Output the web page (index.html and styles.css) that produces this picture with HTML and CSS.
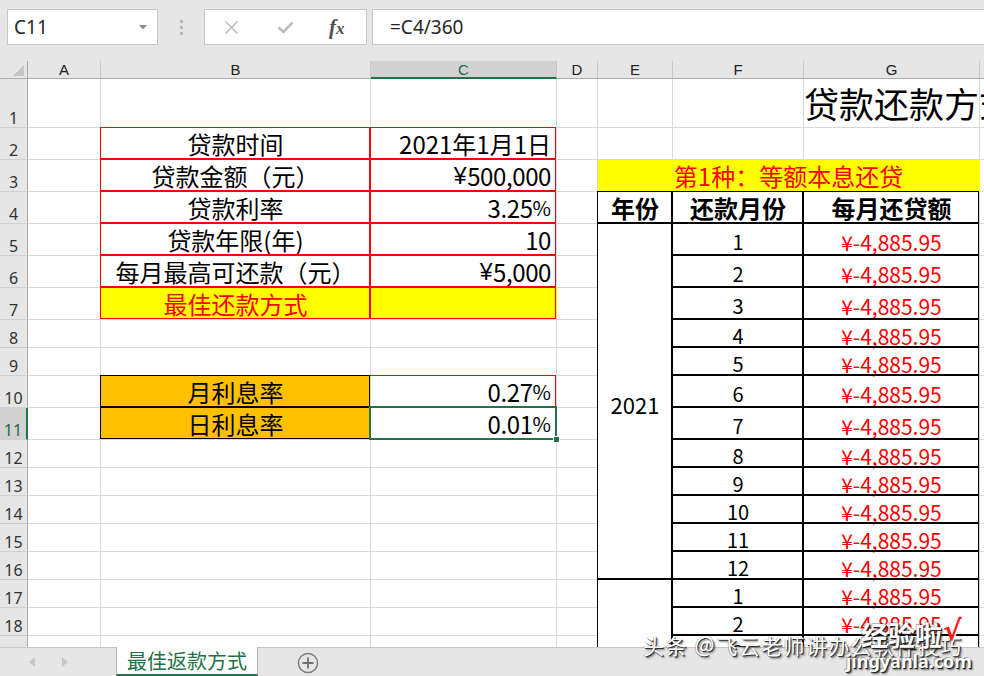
FILE: index.html
```html
<!DOCTYPE html>
<html lang="zh-CN">
<head>
<meta charset="utf-8">
<title>最佳返款方式</title>
<link rel="stylesheet" href="styles.css">
</head>
<body>
<div class="app">
  <div class="fbar">
    <div class="namebox"><span>C11</span><svg class="dd" width="8" height="5" viewBox="0 0 8 5"><polygon points="0,0 8,0 4,4.5" fill="#8a8a8a"/></svg></div>
    <div class="grip"><i></i><i></i><i></i></div>
    <div class="fxbox">
      <svg class="ic-x" width="15" height="15" viewBox="0 0 15 15"><path d="M1.5 1.5 L13.5 13.5 M13.5 1.5 L1.5 13.5" stroke="#bdbdbd" stroke-width="1.6" fill="none"/></svg>
      <svg class="ic-ok" width="17" height="13" viewBox="0 0 17 13"><path d="M1.5 6.5 L6.5 11 L15.5 1.5" stroke="#bdbdbd" stroke-width="2.6" fill="none"/></svg>
      <span class="fx">f<i>x</i></span>
    </div>
    <div class="formula">=C4/360</div>
  </div>

  <div class="sheet">
    <!-- header row -->
    <div class="corner"><svg width="11" height="11" viewBox="0 0 11 11"><polygon points="11,0 11,11 0,11" fill="#c4c4c4"/></svg></div>
    <div class="h">A</div><div class="h">B</div><div class="h hsel">C</div><div class="h">D</div><div class="h">E</div><div class="h">F</div><div class="h">G</div><div class="h"></div>

    <!-- row 1 -->
    <div class="rh">1</div><div class="c"></div><div class="c"></div><div class="c"></div><div class="c"></div><div class="c"></div><div class="c"></div><div class="c title"><span>贷款还款方式</span></div><div class="c"></div>

    <!-- row 2 -->
    <div class="rh">2</div><div class="c"></div><div class="c bd red ctr">贷款时间</div><div class="c bd red rt">2021年1月1日</div><div class="c"></div><div class="c"></div><div class="c"></div><div class="c"></div><div class="c"></div>

    <!-- row 3 -->
    <div class="rh">3</div><div class="c"></div><div class="c bd red ctr">贷款金额（元）</div><div class="c bd red rt num"><span class="yen">¥</span>500,000</div><div class="c"></div><div class="c yel rtx ctr span3">第1种：等额本息还贷</div><div class="c"></div>

    <!-- row 4 -->
    <div class="rh">4</div><div class="c"></div><div class="c bd red ctr">贷款利率</div><div class="c bd red rt num">3.25<span class="pct">%</span></div><div class="c"></div><div class="c bd b ctr">年份</div><div class="c bd b ctr">还款月份</div><div class="c bd b ctr">每月还贷额</div><div class="c"></div>

    <!-- row 5 -->
    <div class="rh">5</div><div class="c"></div><div class="c bd red ctr">贷款年限(年)</div><div class="c bd red rt num">10</div><div class="c"></div><div class="c bd yr span12">2021</div><div class="c bd n">1</div><div class="c bd n amt">¥-4,885.95</div><div class="c"></div>

    <!-- row 6 -->
    <div class="rh">6</div><div class="c"></div><div class="c bd red ctr">每月最高可还款（元）</div><div class="c bd red rt num"><span class="yen">¥</span>5,000</div><div class="c"></div><div class="c bd n">2</div><div class="c bd n amt">¥-4,885.95</div><div class="c"></div>

    <!-- row 7 -->
    <div class="rh">7</div><div class="c"></div><div class="c bd red yel rtx ctr">最佳还款方式</div><div class="c bd red yel"></div><div class="c"></div><div class="c bd n">3</div><div class="c bd n amt">¥-4,885.95</div><div class="c"></div>

    <!-- row 8 -->
    <div class="rh">8</div><div class="c"></div><div class="c"></div><div class="c"></div><div class="c"></div><div class="c bd n">4</div><div class="c bd n amt">¥-4,885.95</div><div class="c"></div>

    <!-- row 9 -->
    <div class="rh">9</div><div class="c"></div><div class="c"></div><div class="c"></div><div class="c"></div><div class="c bd n">5</div><div class="c bd n amt">¥-4,885.95</div><div class="c"></div>

    <!-- row 10 -->
    <div class="rh">10</div><div class="c"></div><div class="c bd org ctr">月利息率</div><div class="c bd red tr rt num">0.27<span class="pct">%</span></div><div class="c"></div><div class="c bd n">6</div><div class="c bd n amt">¥-4,885.95</div><div class="c"></div>

    <!-- row 11 -->
    <div class="rh rsel">11</div><div class="c"></div><div class="c bd org ctr">日利息率</div><div class="c bd red tr rt num active">0.01<span class="pct">%</span><i class="handle"></i></div><div class="c"></div><div class="c bd n">7</div><div class="c bd n amt">¥-4,885.95</div><div class="c"></div>

    <!-- row 12 -->
    <div class="rh">12</div><div class="c"></div><div class="c"></div><div class="c"></div><div class="c"></div><div class="c bd n">8</div><div class="c bd n amt">¥-4,885.95</div><div class="c"></div>

    <!-- row 13 -->
    <div class="rh">13</div><div class="c"></div><div class="c"></div><div class="c"></div><div class="c"></div><div class="c bd n">9</div><div class="c bd n amt">¥-4,885.95</div><div class="c"></div>

    <!-- row 14 -->
    <div class="rh">14</div><div class="c"></div><div class="c"></div><div class="c"></div><div class="c"></div><div class="c bd n">10</div><div class="c bd n amt">¥-4,885.95</div><div class="c"></div>

    <!-- row 15 -->
    <div class="rh">15</div><div class="c"></div><div class="c"></div><div class="c"></div><div class="c"></div><div class="c bd n">11</div><div class="c bd n amt">¥-4,885.95</div><div class="c"></div>

    <!-- row 16 -->
    <div class="rh">16</div><div class="c"></div><div class="c"></div><div class="c"></div><div class="c"></div><div class="c bd n">12</div><div class="c bd n amt">¥-4,885.95</div><div class="c"></div>

    <!-- row 17 -->
    <div class="rh">17</div><div class="c"></div><div class="c"></div><div class="c"></div><div class="c"></div><div class="c bd yr span3r"></div><div class="c bd n">1</div><div class="c bd n amt">¥-4,885.95</div><div class="c"></div>

    <!-- row 18 -->
    <div class="rh">18</div><div class="c"></div><div class="c"></div><div class="c"></div><div class="c"></div><div class="c bd n">2</div><div class="c bd n amt">¥-4,885.95</div><div class="c"></div>

    <!-- row 19 -->
    <div class="rh">19</div><div class="c"></div><div class="c"></div><div class="c"></div><div class="c"></div><div class="c bd n">3</div><div class="c bd n amt">¥-4,885.95</div><div class="c"></div>
  </div>

  <div class="tabs">
    <div class="nav">
      <svg width="8" height="10" viewBox="0 0 8 10"><polygon points="7,0 7,10 1,5" fill="#c8c8c8"/></svg>
      <svg width="8" height="10" viewBox="0 0 8 10"><polygon points="1,0 1,10 7,5" fill="#c8c8c8"/></svg>
    </div>
    <div class="tab">最佳返款方式</div>
    <svg class="add" width="22" height="22" viewBox="0 0 22 22"><circle cx="11" cy="11" r="9.6" fill="none" stroke="#7d7d7d" stroke-width="1.5"/><path d="M11 5.5 V16.5 M5.5 11 H16.5" stroke="#6f6f6f" stroke-width="1.8"/></svg>
  </div>

  <div class="wm">
    <div class="wm-main">头条 ＠飞云老师讲办公软件技巧</div>
    <div class="wm-jy">经验啦</div>
    <div class="wm-ok">√</div>
    <div class="wm-url">jingyanla.com</div>
  </div>
</div>
</body>
</html>
```

FILE: styles.css
```css
* { box-sizing: border-box; margin: 0; padding: 0; }
html, body { width: 984px; height: 676px; overflow: hidden; background: #fff; }
body { font-family: "Noto Sans CJK SC", "Noto Sans", sans-serif; color: #000; }

.app { position: relative; width: 984px; height: 676px; display: flex; flex-direction: column; }

/* formula bar */
.fbar { flex: none; height: 61px; background: #e6e6e6; display: flex; align-items: flex-start; padding: 9px 0 0 7px; }
.namebox { width: 151px; height: 36px; background: #fff; border: 1px solid #c6c6c6; display: flex; align-items: center; justify-content: space-between; padding: 0 10px 0 6px; font-family: "Noto Sans", sans-serif; font-size: 19px; color: #262626; }
.grip { width: 46px; height: 36px; display: flex; flex-direction: column; align-items: center; justify-content: center; gap: 3px; }
.grip i { display: block; width: 3px; height: 3px; background: #b9b9b9; }
.fxbox { width: 163px; height: 36px; background: #fff; border: 1px solid #c6c6c6; display: flex; align-items: center; padding-left: 19px; }
.ic-ok { margin-left: 38px; margin-top: 1px; }
.fx { margin-left: 35px; font-family: "Liberation Serif", serif; font-style: italic; font-size: 21px; color: #505050; font-weight: bold; }
.fx i { font-size: 17px; }
.formula { flex: 1; height: 36px; margin-left: 5px; background: #fff; border: 1px solid #c6c6c6; border-right: none; padding-left: 17px; display: flex; align-items: center; font-family: "Noto Sans", sans-serif; font-size: 19px; color: #262626; }

/* sheet grid */
.sheet {
  flex: none; height: 586px; overflow: hidden; background: #fff;
  display: grid;
  grid-template-columns: 28px 73px 270px 186px 41px 75px 131px 176px 100px;
  grid-template-rows: 18px 49px repeat(6, 32px) 28px 28px 32px 32px repeat(8, 28px);
  width: 1080px;
}
.corner { background: #e6e6e6; border-right: 1px solid #ababab; border-bottom: 1px solid #ababab; display: flex; align-items: flex-end; justify-content: flex-end; padding: 0 3px 2px 0; }
.h { background: #e6e6e6; border-right: 1px solid #c8c8c8; border-bottom: 1px solid #ababab; font-family: "Liberation Sans", sans-serif; font-size: 15px; line-height: 17px; text-align: center; color: #222; }
.hsel { background: #d2d2d2; border-bottom: 2px solid #217346; color: #1e6b41; }
.rh { background: #e6e6e6; border-right: 1px solid #ababab; border-bottom: 1px solid #d0d0d0; font-family: "Noto Sans", sans-serif; font-size: 16px; line-height: 18px; color: #333; display: flex; align-items: flex-end; justify-content: center; }
.rsel { background: #d2d2d2; border-right: 2px solid #217346; color: #1e6b41; }

.c {
  border-right: 1px solid #d9d9d9; border-bottom: 1px solid #d9d9d9;
  display: flex; align-items: flex-end; white-space: nowrap;
  font-size: 24px; line-height: 30px; padding: 0 4px;
}
.ctr { justify-content: center; }
.rt { justify-content: flex-end; padding-right: 5px; }
.num { letter-spacing: -0.4px; }
.yen { font-family: "Liberation Sans", sans-serif; font-size: 23px; margin-right: 1px; }
.pct { font-size: 20px; letter-spacing: 0; }
.b { font-weight: bold; }
.rtx { color: #ff0000; }
.yel { background: #ffff00; border-color: transparent; }
.org { background: #ffc000; }
.span3 { grid-column: span 3; }
.span12 { grid-row: span 12; }
.span3r { grid-row: span 3; }

.title { font-size: 35px; line-height: 48px; justify-content: flex-start; padding-left: 0; }

.bd { position: relative; }
.bd::after { content: ""; position: absolute; top: -1px; left: -1px; right: 0; bottom: 0; border: 1px solid var(--bc, #000); pointer-events: none; }
.red { --bc: #ff0000; }
.tr::after { border-left: none; border-bottom: none; }

.n { justify-content: center; align-items: center; font-size: 20px; line-height: 24px; padding-top: 4px; }
.amt { color: #ff0000; font-size: 21px; }
.yr { justify-content: center; align-items: center; font-size: 22px; line-height: 28px; padding-top: 4px; }

.active::before { content: ""; position: absolute; top: -2px; left: -2px; right: -1px; bottom: -1px; border: 2px solid #217346; z-index: 2; }
.handle { position: absolute; right: -4px; bottom: -4px; width: 7px; height: 7px; background: #217346; border: 1px solid #fff; z-index: 3; }

/* sheet tabs */
.tabs { flex: none; height: 29px; background: #e6e6e6; border-top: 1px solid #c6c6c6; display: flex; align-items: stretch; }
.nav { width: 116px; display: flex; align-items: center; padding-left: 28px; gap: 25px; }
.tab { width: 142px; margin-top: -1px; background: #fff; border-left: 1px solid #b4b4b4; border-right: 1px solid #b4b4b4; border-bottom: 2px solid #217346; color: #217346; font-size: 20px; line-height: 26px; display: flex; align-items: center; justify-content: center; padding-top: 1px; }
.add { align-self: center; margin-left: 39px; margin-top: 1px; }

/* watermark overlay */
.wm { position: absolute; left: 640px; top: 612px; width: 344px; height: 64px; color: #fff; pointer-events: none; }
.wm-main { position: absolute; left: 3px; top: 20px; font-size: 21px; line-height: 26px; white-space: nowrap; letter-spacing: 1.4px; text-shadow: 1px 1px 0 #333, 2px 2px 2px rgba(0,0,0,.55), -1px 0 0 rgba(0,0,0,.25); }
.wm-jy { position: absolute; left: 221px; top: 6px; font-size: 27px; line-height: 34px; font-weight: bold; white-space: nowrap; text-shadow: 1px 1px 0 #222, 2px 2px 2px rgba(0,0,0,.6), -1px -1px 0 rgba(0,0,0,.3); }
.wm-ok { position: absolute; left: 303px; top: 2px; font-family: "DejaVu Sans", sans-serif; font-size: 28px; line-height: 34px; font-weight: bold; color: #ff1a1a; text-shadow: 1px 1px 0 #fff; }
.wm-url { position: absolute; left: 206px; top: 38px; font-family: "Noto Sans", sans-serif; font-size: 18px; line-height: 22px; font-weight: bold; white-space: nowrap; text-shadow: 1px 1px 0 #222, 2px 2px 2px rgba(0,0,0,.6), -1px -1px 0 rgba(0,0,0,.3); }
```
